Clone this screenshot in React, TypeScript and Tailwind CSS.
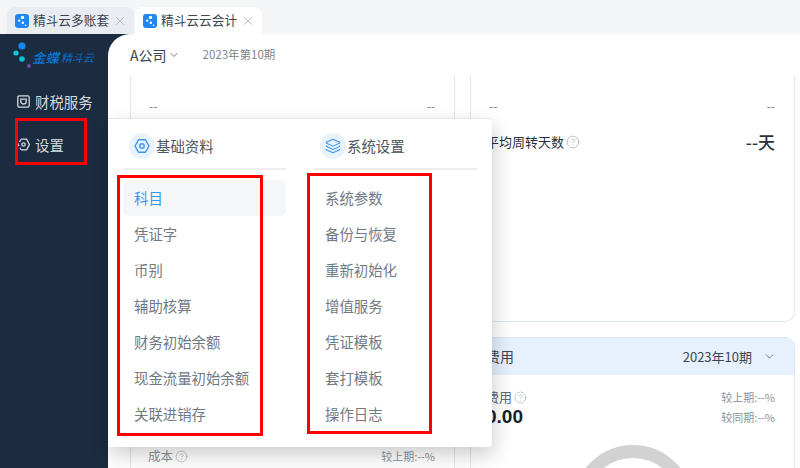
import { ChevronDown, CircleHelp, Layers, X } from "lucide-react";

const basicItems = ["科目", "凭证字", "币别", "辅助核算", "财务初始余额", "现金流量初始余额", "关联进销存"];
const systemItems = ["系统参数", "备份与恢复", "重新初始化", "增值服务", "凭证模板", "套打模板", "操作日志"];

const TabIcon = () => (
  <svg width="14" height="14" viewBox="0 0 14 14" className="shrink-0">
    <rect width="14" height="14" rx="3" fill="#1e88f0" />
    <circle cx="7.5" cy="3.5" r="1.7" fill="#fff" />
    <circle cx="4.2" cy="6.6" r="1.2" fill="#fff" />
    <circle cx="7.8" cy="8.8" r="1.3" fill="#fff" />
    <circle cx="10.6" cy="11.2" r="0.8" fill="#fff" />
  </svg>
);

const Tab = ({ label, active }: { label: string; active?: boolean }) => (
  <div
    className={`flex h-[27px] w-[127px] items-center rounded-t-[8px] pl-[8px] ${active ? "bg-white" : "bg-[#e9edf1]"}`}
  >
    <TabIcon />
    <span className="ml-[4px] w-[80px] text-[12.7px] leading-none whitespace-nowrap text-[#3a4650]">{label}</span>
    <X size={14} strokeWidth={1} className="text-[#8d969e]" />
  </div>
);

const Logo = () => (
  <div className="flex h-[48px] items-center pl-[12px]">
    <svg width="22" height="38" viewBox="0 0 22 38" className="shrink-0">
      <circle cx="10" cy="7" r="3.6" fill="#1687ee" />
      <circle cx="4" cy="14" r="2.6" fill="#0fc4dc" />
      <circle cx="10" cy="20" r="2.8" fill="#06c2d8" />
      <circle cx="17" cy="27" r="2" fill="#6d4aa8" />
    </svg>
    <span className="-ml-[2px] -mt-[2px] text-[13.5px] font-medium whitespace-nowrap text-[#0a78d2] italic">金蝶</span>
    <span className="ml-[2px] -mt-[2px] text-[11px] whitespace-nowrap text-[#0a6fc4] italic">精斗云</span>
  </div>
);

const SideItem = ({ label, kind }: { label: string; kind: "tax" | "gear" }) => (
  <div className="flex h-[43px] items-center pl-[17px] text-[14.4px] text-[#d5dadf]">
    {kind === "tax" ? (
      <svg width="13" height="13" viewBox="0 0 13 13" fill="none" stroke="#d5dadf" strokeWidth="1.3">
        <rect x="0.8" y="0.8" width="11.4" height="11.4" rx="1.6" />
        <path d="M3.8 4.2h5.4v2.2c0 1.5-1.2 2.6-2.7 2.6S3.8 7.9 3.8 6.4z" />
      </svg>
    ) : (
      <svg width="13" height="13" viewBox="0 0 13 13" fill="none" stroke="#d5dadf" strokeWidth="1.3">
        <path d="M4 1.2h5.6l2.8 5.3-2.8 5.3H4" />
        <path d="M4 1.2 1 6.5l3 5.3" strokeDasharray="3 2" />
        <circle cx="6.5" cy="6.5" r="1.7" />
      </svg>
    )}
    <span className="ml-[5px] whitespace-nowrap">{label}</span>
  </div>
);

const Help = ({ size = 13 }: { size?: number }) => (
  <CircleHelp size={size} strokeWidth={1.2} className="text-[#a4abb2]" />
);

const MenuColumn = ({
  title,
  icon,
  items,
  activeItem,
}: {
  title: string;
  icon: React.ReactNode;
  items: string[];
  activeItem?: string;
}) => (
  <div className="w-[163px]">
    <div className="flex h-[51px] items-center border-b-2 border-[#ebedef] pl-[6px] pt-[4px]">
      <div className="flex size-[26px] items-center justify-center rounded-full bg-[#e8f3fe]">{icon}</div>
      <span className="ml-[1px] text-[14.4px] text-[#4b5660]">{title}</span>
    </div>
    <div className="mt-[10px]">
      {items.map((item) => (
        <div
          key={item}
          className={`flex h-[36px] items-center rounded-[6px] pl-[11px] text-[14.4px] whitespace-nowrap ${
            item === activeItem ? "bg-[#f4f6f7] text-[#3d96f2]" : "text-[#6f7a84]"
          }`}
        >
          {item}
        </div>
      ))}
    </div>
  </div>
);

const Annotation = ({ className }: { className: string }) => (
  <div className={`absolute border-[3px] border-[#ff0000] ${className}`} />
);

export default function App() {
  return (
    <div className="relative flex h-[468px] w-[800px] flex-col overflow-hidden bg-white font-['Noto_Sans_CJK_SC',sans-serif]">
      <div className="flex h-[34px] shrink-0 items-end gap-[1px] bg-[#f3f5f7] pl-[7px]">
        <Tab label="精斗云多账套" />
        <Tab label="精斗云云会计" active />
      </div>

      <div className="flex min-h-0 flex-1 bg-[#1b2b40]">
        <aside className="w-[108px] shrink-0">
          <Logo />
          <div className="mt-[-2px]">
            <SideItem label="财税服务" kind="tax" />
            <SideItem label="设置" kind="gear" />
          </div>
        </aside>

        <main className="min-w-0 flex-1 overflow-hidden rounded-tl-[22px] bg-white pl-[22px] pr-[5px]">
          <div className="flex h-[42px] items-center">
            <span className="text-[14px] text-[#3a4650]">A公司</span>
            <ChevronDown size={12} strokeWidth={1.4} className="ml-[1px] text-[#3a4650]" />
            <span className="ml-[23px] text-[11.5px] text-[#7c858d]">2023年第10期</span>
          </div>

          <div className="grid grid-cols-[325px_325px] gap-x-[15px] gap-y-[15px]">
            <section className="h-[246px] rounded-b-[10px] border border-t-0 border-[#d9e6f5] pl-[18px] pr-[19px] pt-[21px]">
              <div className="flex h-[18px] items-center justify-between text-[12px] text-[#6f7a84]">
                <span>--</span>
                <span>--</span>
              </div>
            </section>

            <section className="h-[246px] rounded-b-[10px] border border-t-0 border-[#d9e6f5] pl-[15px] pr-[19px] pt-[21px]">
              <div className="flex h-[18px] items-center justify-between pl-[3px] text-[12px] text-[#6f7a84]">
                <span>--</span>
                <span>--</span>
              </div>
              <div className="mt-[14px] flex items-center justify-between">
                <div className="flex items-center gap-[2px] text-[13px] text-[#26323d]">
                  平均周转天数
                  <Help size={14} />
                </div>
                <span className="text-[17px] font-medium text-[#26323d]">--天</span>
              </div>
            </section>

            <section className="h-[200px] rounded-t-[10px] border border-[#d9e6f5] pl-[17px] pr-[19px]">
              <div className="h-[37px]" />
              <div className="mt-[72px] flex items-center justify-between text-[11px] text-[#8b949c]">
                <div className="flex items-center gap-[2px] text-[12.5px]">
                  成本
                  <Help />
                </div>
                <span>较上期:--%</span>
              </div>
            </section>

            <section className="relative h-[200px] overflow-hidden rounded-t-[10px] border border-[#d9e6f5]">
              <div className="flex h-[37px] items-center justify-between bg-[#e6f1fd] pl-[15px] pr-[19px]">
                <span className="text-[14px] text-[#3a4650]">费用</span>
                <div className="flex items-center text-[#3a4650]">
                  <span className="text-[13px]">2023年10期</span>
                  <ChevronDown size={13} strokeWidth={1.2} className="ml-[11px] -mr-[1px]" />
                </div>
              </div>
              <div className="flex justify-between pl-[15px] pr-[19px] pt-[12px]">
                <div>
                  <div className="flex items-center gap-[2px] text-[13px] leading-[20px] text-[#5f6a74]">
                    费用
                    <Help />
                  </div>
                  <div className="font-['Liberation_Sans',sans-serif] text-[19px] leading-[20px] font-bold text-[#14202c]">
                    0.00
                  </div>
                </div>
                <div className="text-[11px] leading-[20px] text-[#8b949c]">
                  <div>较上期:--%</div>
                  <div>较同期:--%</div>
                </div>
              </div>
              <div className="mx-auto mt-[18px] size-[120px] rounded-full border-[13px] border-[#d2d2d2]" />
            </section>
          </div>
        </main>
      </div>

      <div className="absolute left-[108px] top-[118px] flex h-[329px] w-[384px] gap-[28px] rounded-r-[4px] border-t border-[#e3e7ea] bg-white pl-[15px] shadow-[2px_8px_20px_rgba(0,0,0,0.2)]">
        <MenuColumn
          title="基础资料"
          items={basicItems}
          activeItem="科目"
          icon={
            <svg width="16" height="16" viewBox="0 0 16 16" fill="none" stroke="#3d96f2" strokeWidth="1.4">
              <path d="M4.5 1.8h7L15 8l-3.5 6.2h-7L1 8z" strokeLinejoin="round" />
              <circle cx="8" cy="8" r="2.2" />
            </svg>
          }
        />
        <MenuColumn
          title="系统设置"
          items={systemItems}
          icon={<Layers size={16} strokeWidth={1.6} className="text-[#3d96f2]" />}
        />
      </div>

      <Annotation className="left-[15px] top-[118px] h-[47px] w-[72px]" />
      <Annotation className="left-[117px] top-[175px] h-[261px] w-[146px]" />
      <Annotation className="left-[307px] top-[173px] h-[261px] w-[125px]" />
    </div>
  );
}
